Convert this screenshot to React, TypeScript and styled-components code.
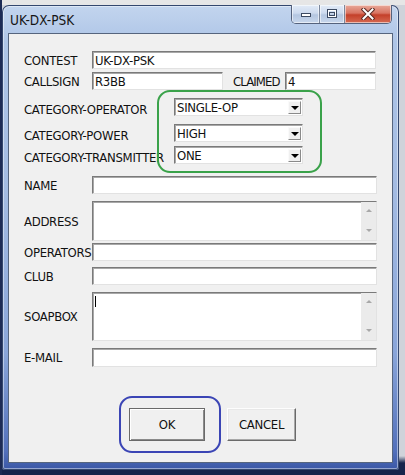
import React from "react";
import styled, { createGlobalStyle } from "styled-components";

const FONT = `"Liberation Sans Narrow", "DejaVu Sans Condensed", "Liberation Sans", Arial, sans-serif`;

const Global = createGlobalStyle`
  html, body { margin: 0; padding: 0; }
  body { width: 405px; height: 475px; overflow: hidden; font-family: ${FONT}; }
`;

const Desktop = styled.div`
  width: 405px;
  height: 475px;
  box-sizing: border-box;
  padding: 5px 6px 5px 2px;
  background:
    linear-gradient(to right, #1d2b55 0 2px, transparent 2px),
    linear-gradient(to bottom, #e6e6e6 0 5px, #cfd3da 5px 456px, #16244c 463px 100%);
`;

const Window = styled.div`
  width: 397px;
  height: 465px;
  box-sizing: border-box;
  padding: 0 6px 7px;
  border-radius: 7px 7px 3px 3px;
  display: flex;
  flex-direction: column;
  background: linear-gradient(to bottom, #c3d5ee 0%, #aec5e7 8%, #a3bbe2 40%, #89a5d9 75%, #5270bb 96%, #3a57a6 100%);
  box-shadow: inset 0 0 0 1px #34476e, inset 0 0 0 2px rgba(255, 255, 255, 0.45);
`;

const TitleBar = styled.div`
  height: 28px;
  display: flex;
  align-items: flex-start;
  padding: 0 1px 0 2px;
`;

const Title = styled.div`
  margin-top: 8px;
  font-size: 13.5px;
  line-height: 15px;
  color: #151515;
`;

const CaptionGroup = styled.div`
  margin-left: auto;
  height: 19px;
  display: flex;
  border: 1px solid #55627c;
  border-top: none;
  border-radius: 0 0 5px 5px;
  overflow: hidden;
  box-sizing: border-box;
`;

const CaptionBtn = styled.div<{ $w: number; $close?: boolean }>`
  width: ${(p) => p.$w}px;
  height: 100%;
  display: flex;
  align-items: center;
  justify-content: center;
  box-sizing: border-box;
  border-left: ${(p) => (p.$close ? "1px solid #6b4a50" : "none")};
  & + & {
    border-left: 1px solid #7b879c;
  }
  background: ${(p) =>
    p.$close
      ? "linear-gradient(to bottom, #e9a99a 0%, #d87462 45%, #c4402a 55%, #d66a52 100%)"
      : "linear-gradient(to bottom, #e2ebf7 0%, #cddaee 45%, #b4c6e0 55%, #c8d7ec 100%)"};
  box-shadow: inset 0 0 0 1px rgba(255, 255, 255, 0.55);
`;

const Client = styled.div`
  flex: 1;
  position: relative;
  background: #f0f0f0;
  border: 1px solid #56657e;
  display: flex;
  flex-direction: column;
  padding: 17px 15px 0 15px;
  font-size: 13px;
  letter-spacing: -0.3px;
  color: #111;
`;

const Row = styled.div<{ $mt: number; $h: number }>`
  display: flex;
  align-items: center;
  margin-top: ${(p) => p.$mt}px;
  height: ${(p) => p.$h}px;
`;

const Label = styled.div<{ $w: number; $dy?: number; $ml?: number; $ls?: number }>`
  width: ${(p) => p.$w}px;
  flex: none;
  margin-left: ${(p) => p.$ml ?? 0}px;
  padding-top: ${(p) => (p.$dy ?? 0) * 2}px;
  ${(p) => (p.$ls !== undefined ? `letter-spacing: ${p.$ls}px;` : "")}
  white-space: nowrap;
  line-height: 15px;
`;

const Field = styled.div<{ $w?: number }>`
  ${(p) => (p.$w ? `width: ${p.$w}px; flex: none;` : "flex: 1;")}
  height: 100%;
  box-sizing: border-box;
  background: #fff;
  border: 1px solid;
  border-color: #7a7a7a #e2e2e2 #e2e2e2 #7a7a7a;
  box-shadow: inset 1px 1px 0 #a8a8a8;
  display: flex;
  align-items: center;
  padding-left: 2px;
  line-height: 15px;
  white-space: nowrap;
`;

const AreaField = styled(Field)`
  align-items: stretch;
  padding-left: 0;
`;

const AreaText = styled.div`
  flex: 1;
  position: relative;
`;

const Caret = styled.span`
  position: absolute;
  left: 2px;
  top: 3px;
  width: 1px;
  height: 11px;
  background: #000;
`;

const ScrollBar = styled.div`
  width: 15px;
  background: #ebebeb;
  display: flex;
  flex-direction: column;
  justify-content: space-between;
  align-items: center;
  padding: 7px 0 8px;
`;

const Arrow = styled.div<{ $down?: boolean }>`
  width: 0;
  height: 0;
  border-left: 3.5px solid transparent;
  border-right: 3.5px solid transparent;
  ${(p) => (p.$down ? "border-top: 3px solid #a8a8a8;" : "border-bottom: 3px solid #a8a8a8;")}
`;

const DropBtn = styled.div`
  margin-left: auto;
  margin-right: 1px;
  width: 13px;
  height: 13px;
  box-sizing: border-box;
  background: #f0f0f0;
  border: 1px solid;
  border-color: #fafafa #8a8a8a #8a8a8a #fafafa;
  display: flex;
  align-items: center;
  justify-content: center;
  &::after {
    content: "";
    border-left: 4px solid transparent;
    border-right: 4px solid transparent;
    border-top: 4px solid #000;
    margin-top: 1px;
  }
`;

const CategoryGroup = styled.div`
  position: relative;
  display: flex;
  flex-direction: column;
`;

const Mark = styled.div<{ $color: string }>`
  position: absolute;
  border: 2.5px solid ${(p) => p.$color};
  border-radius: 13px;
  pointer-events: none;
`;

const ButtonRow = styled.div`
  display: flex;
  margin-top: 41px;
  padding-left: 105px;
  height: 33px;
`;

const ButtonWrap = styled.div`
  position: relative;
  display: flex;
`;

const Button = styled.div<{ $w: number; $default?: boolean; $ml?: number }>`
  width: ${(p) => p.$w}px;
  height: 33px;
  margin-left: ${(p) => p.$ml ?? 0}px;
  box-sizing: border-box;
  display: flex;
  align-items: center;
  justify-content: center;
  background: #f0f0f0;
  border: 1px solid;
  border-color: ${(p) => (p.$default ? "#6a6a6a" : "#fdfdfd #6a6a6a #6a6a6a #fdfdfd")};
  box-shadow: ${(p) =>
    p.$default
      ? "inset 1px 1px 0 #fff, inset -1px -1px 0 #8a8a8a"
      : "inset -1px -1px 0 #a8a8a8, inset 1px 1px 0 #e8e8e8"};
  line-height: 15px;
`;

function TextArea({ caret }: { caret?: boolean }) {
  return (
    <AreaField>
      <AreaText>{caret && <Caret />}</AreaText>
      <ScrollBar>
        <Arrow />
        <Arrow $down />
      </ScrollBar>
    </AreaField>
  );
}

function Select({ value }: { value: string }) {
  return (
    <Field $w={129}>
      {value}
      <DropBtn />
    </Field>
  );
}

export default function App() {
  return (
    <>
      <Global />
      <Desktop>
        <Window>
          <TitleBar>
            <Title>UK-DX-PSK</Title>
            <CaptionGroup>
              <CaptionBtn $w={27}>
                <svg width="12" height="8" viewBox="0 0 12 8">
                  <rect x="1.5" y="3.5" width="9" height="3" fill="#fff" stroke="#3c4a62" />
                </svg>
              </CaptionBtn>
              <CaptionBtn $w={25}>
                <svg width="12" height="10" viewBox="0 0 12 10">
                  <rect x="1.5" y="0.5" width="9" height="8" fill="none" stroke="#3c4a62" />
                  <rect x="2.5" y="1.5" width="7" height="6" fill="none" stroke="#fff" />
                  <rect x="3.5" y="3.5" width="5" height="3" fill="none" stroke="#3c4a62" />
                </svg>
              </CaptionBtn>
              <CaptionBtn $w={47} $close>
                <svg width="14" height="12" viewBox="0 0 14 12">
                  <path d="M2.5 1.5 L11.5 10.5 M11.5 1.5 L2.5 10.5" stroke="#5a2a24" strokeWidth="4" strokeLinecap="square" />
                  <path d="M2.5 1.5 L11.5 10.5 M11.5 1.5 L2.5 10.5" stroke="#fff" strokeWidth="2" strokeLinecap="square" />
                </svg>
              </CaptionBtn>
            </CaptionGroup>
          </TitleBar>
          <Client>
            <Row $mt={0} $h={18}>
              <Label $w={68}>CONTEST</Label>
              <Field $w={284}>UK-DX-PSK</Field>
            </Row>
            <Row $mt={3} $h={18}>
              <Label $w={68}>CALLSIGN</Label>
              <Field $w={131}>R3BB</Field>
              <Label $w={52} $ml={10} $ls={-0.9}>CLAIMED</Label>
              <Field $w={91}>4</Field>
            </Row>
            <CategoryGroup>
              <Row $mt={8} $h={18}>
                <Label $w={150} $dy={2}>CATEGORY-OPERATOR</Label>
                <Select value="SINGLE-OP" />
              </Row>
              <Row $mt={8} $h={18}>
                <Label $w={150} $dy={2}>CATEGORY-POWER</Label>
                <Select value="HIGH" />
              </Row>
              <Row $mt={4} $h={18}>
                <Label $w={150} $dy={2}>CATEGORY-TRANSMITTER</Label>
                <Select value="ONE" />
              </Row>
              <Mark $color="#3aa24a" style={{ left: 133, top: 0, width: 161, height: 79 }} />
            </CategoryGroup>
            <Row $mt={12} $h={18}>
              <Label $w={68}>NAME</Label>
              <Field />
            </Row>
            <Row $mt={7} $h={40}>
              <Label $w={68}>ADDRESS</Label>
              <TextArea />
            </Row>
            <Row $mt={2} $h={18}>
              <Label $w={68}>OPERATORS</Label>
              <Field />
            </Row>
            <Row $mt={6} $h={18}>
              <Label $w={68}>CLUB</Label>
              <Field />
            </Row>
            <Row $mt={7} $h={49}>
              <Label $w={68}>SOAPBOX</Label>
              <TextArea caret />
            </Row>
            <Row $mt={7} $h={19}>
              <Label $w={68}>E-MAIL</Label>
              <Field />
            </Row>
            <ButtonRow>
              <ButtonWrap>
                <Button $w={76} $default>OK</Button>
                <Mark $color="#3b45b5" style={{ left: -10, top: -12, width: 98, height: 53 }} />
              </ButtonWrap>
              <Button $w={69} $ml={22}>CANCEL</Button>
            </ButtonRow>
          </Client>
        </Window>
      </Desktop>
    </>
  );
}
